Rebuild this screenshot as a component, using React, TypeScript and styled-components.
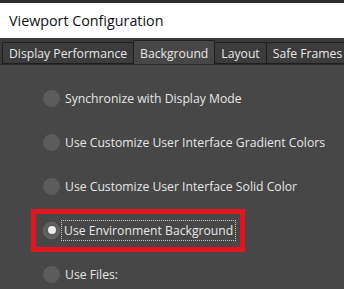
import React, { useState } from 'react';
import styled, { createGlobalStyle } from 'styled-components';

const GlobalStyle = createGlobalStyle`
  html, body {
    margin: 0;
    padding: 0;
    background: #474747;
  }
  * {
    box-sizing: border-box;
  }
`;

const Window = styled.div`
  width: 344px;
  height: 289px;
  overflow: hidden;
  display: flex;
  flex-direction: column;
  background-color: #474747;
  font-family: 'Open Sans', 'Noto Sans', Arial, sans-serif;

  & > * {
    flex-shrink: 0;
  }
`;

const TopEdge = styled.div`
  height: 3px;
  background-color: #2e2e2e;
`;

const TitleBar = styled.div`
  height: 35px;
  display: flex;
  align-items: center;
  padding-left: 9px;
  background-color: #ffffff;
  color: #111;
  font-size: 14.3px;
`;

const TabStrip = styled.div`
  height: 27px;
  display: flex;
  align-items: flex-end;
  padding-left: 3px;
  overflow: hidden;
  background-color: #393939;
  border-bottom: 1px solid #2a2a2a;
`;

const Tab = styled.div<{ $active?: boolean }>`
  height: ${(p) => (p.$active ? '25px' : '22px')};
  margin-bottom: ${(p) => (p.$active ? '-1px' : '0')};
  display: flex;
  align-items: center;
  padding: 0 6px;
  flex-shrink: 0;
  border: 1px solid #1e1e1e;
  border-bottom: ${(p) => (p.$active ? 'none' : '1px solid #1e1e1e')};
  border-radius: 2px 2px 0 0;
  margin-left: -1px;
  background-color: ${(p) => (p.$active ? '#474747' : '#3c3c3c')};
  color: #e6e6e6;
  font-size: 12.2px;
  white-space: nowrap;
`;

const Panel = styled.div`
  display: flex;
  flex-direction: column;
  padding: 11px 0 0 43px;
`;

const OptionRow = styled.label`
  height: 44px;
  display: flex;
  align-items: center;
  gap: 5px;
  cursor: pointer;
  color: #e6e6e6;
  font-size: 12.2px;
  white-space: nowrap;
`;

const Highlight = styled.div`
  height: 43px;
  display: flex;
  align-items: center;
  gap: 1px;
  margin-left: -12px;
  padding: 0 4px 0 7px;
  border: 5px solid #e3161f;
`;

const Radio = styled.span<{ $checked?: boolean }>`
  width: 17px;
  height: 17px;
  flex-shrink: 0;
  display: flex;
  align-items: center;
  justify-content: center;
  border-radius: 50%;
  background-color: #5c5c5c;
  border: 1px solid ${(p) => (p.$checked ? '#6e6e6e' : '#5c5c5c')};

  &::after {
    content: '';
    width: 8px;
    height: 8px;
    border-radius: 50%;
    background-color: #ececec;
    display: ${(p) => (p.$checked ? 'block' : 'none')};
  }
`;

const FocusLabel = styled.span`
  padding: 1px 2px;
  border: 1px dotted #c8c8c8;
`;

const tabs = ['Display Performance', 'Background', 'Layout', 'Safe Frames'];

const options = [
  'Synchronize with Display Mode',
  'Use Customize User Interface Gradient Colors',
  'Use Customize User Interface Solid Color',
  'Use Environment Background',
  'Use Files:',
];

const App: React.FC = () => {
  const [selected, setSelected] = useState(3);

  return (
    <Window>
      <GlobalStyle />
      <TopEdge />
      <TitleBar>Viewport Configuration</TitleBar>
      <TabStrip>
        {tabs.map((t) => (
          <Tab key={t} $active={t === 'Background'}>
            {t}
          </Tab>
        ))}
      </TabStrip>
      <Panel>
        {options.map((o, i) =>
          i === selected ? (
            <OptionRow key={o}>
              <Highlight>
                <Radio $checked />
                <FocusLabel>{o}</FocusLabel>
              </Highlight>
            </OptionRow>
          ) : (
            <OptionRow key={o} onClick={() => setSelected(i)}>
              <Radio />
              <span>{o}</span>
            </OptionRow>
          )
        )}
      </Panel>
    </Window>
  );
};

export default App;
